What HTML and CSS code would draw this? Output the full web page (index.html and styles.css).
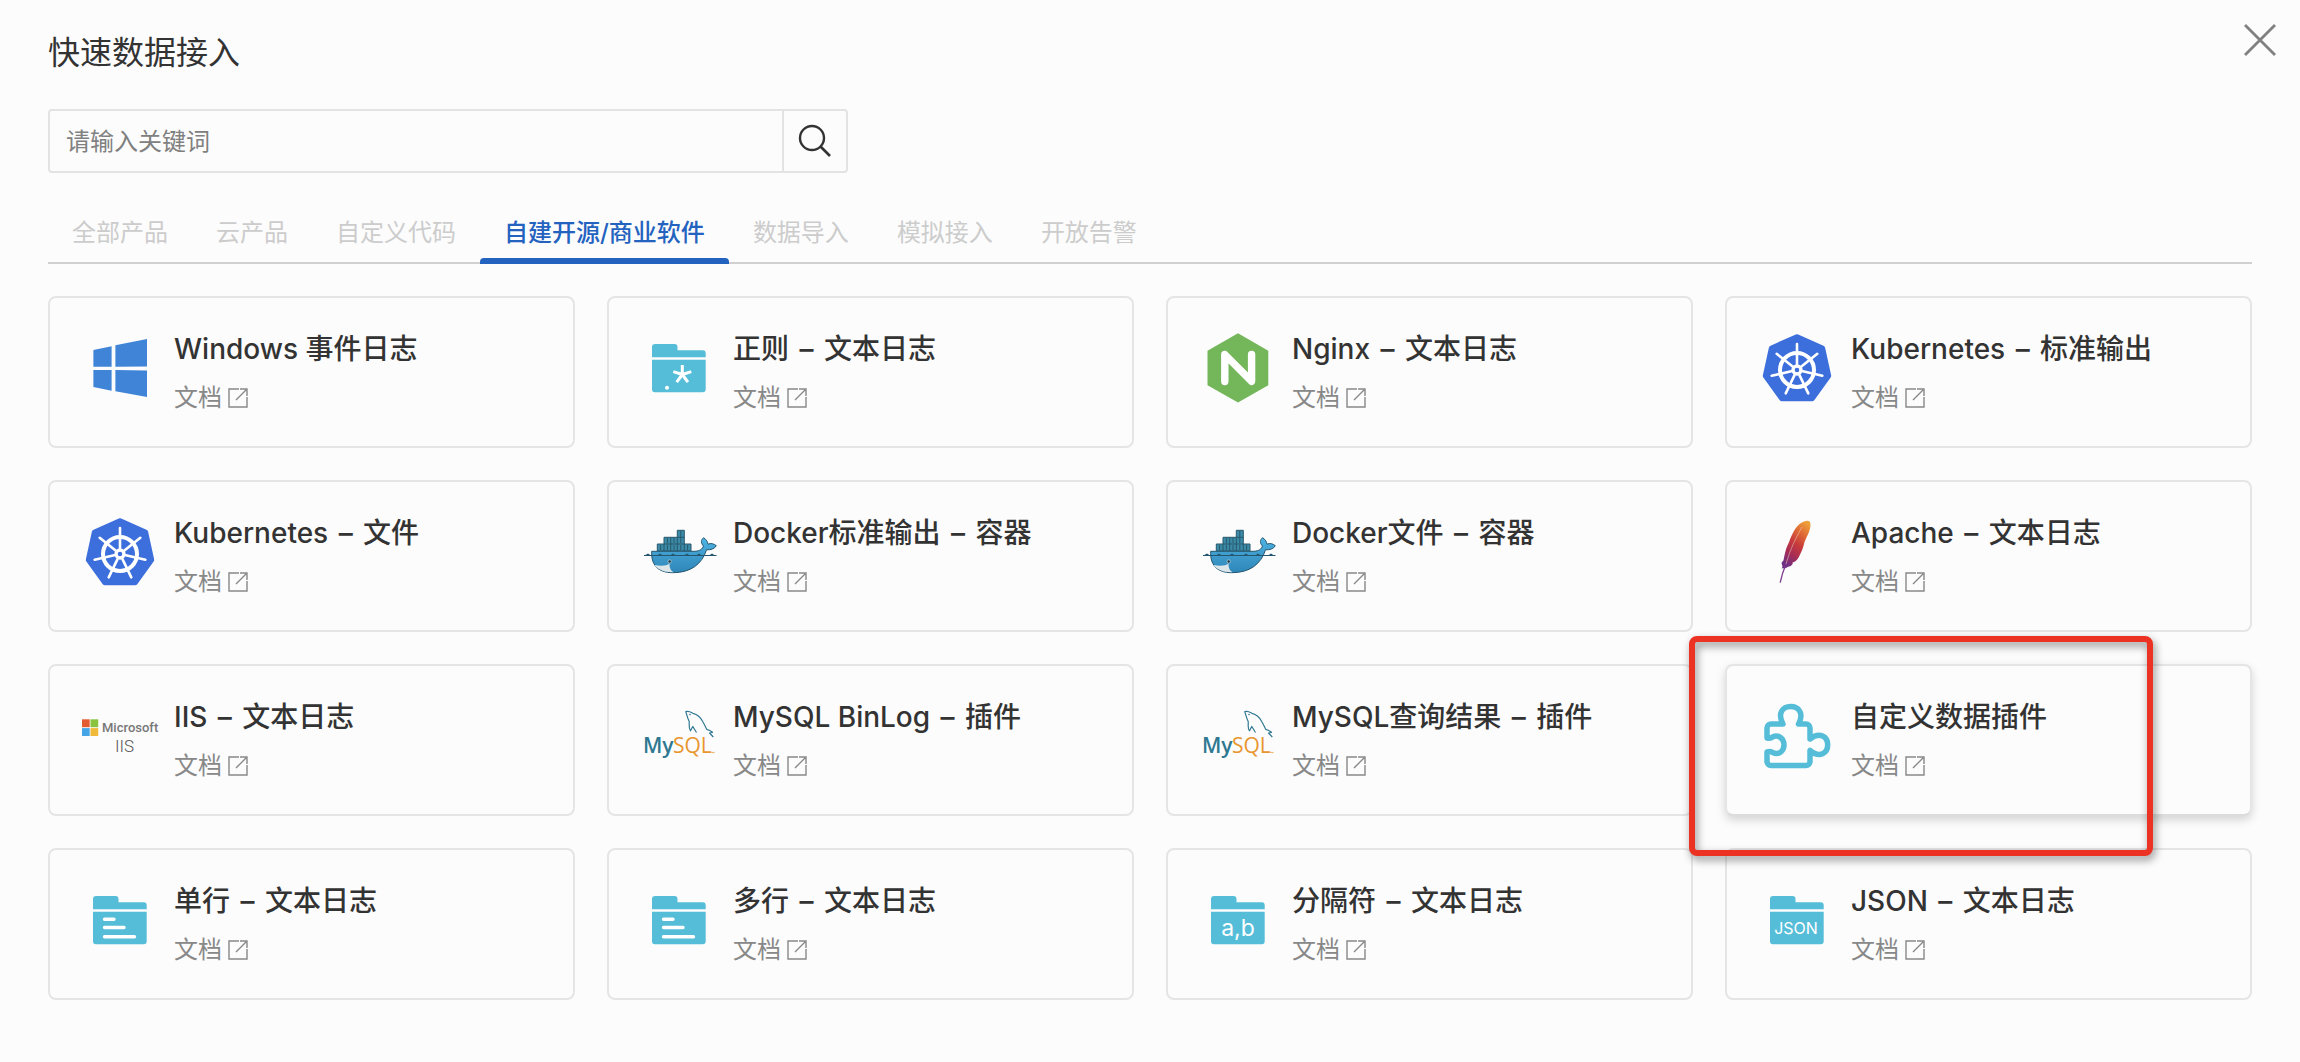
FILE: index.html
```html
<!DOCTYPE html>
<html lang="zh-CN">
<head>
<meta charset="utf-8">
<title>快速数据接入</title>
<link rel="stylesheet" href="styles.css">
</head>
<body>
<svg class="sprite" aria-hidden="true">
  <defs>
    <linearGradient id="feather" x1="0.8" y1="0" x2="0.3" y2="1">
      <stop offset="0" stop-color="#eea13a"/>
      <stop offset="0.25" stop-color="#df6a35"/>
      <stop offset="0.5" stop-color="#c73a3c"/>
      <stop offset="0.75" stop-color="#a52c55"/>
      <stop offset="1" stop-color="#6d2f86"/>
    </linearGradient>
    <linearGradient id="whale-body" x1="0" y1="0" x2="0" y2="1">
      <stop offset="0" stop-color="#4db4e4"/>
      <stop offset="0.5" stop-color="#3f9ccd"/>
      <stop offset="1" stop-color="#2e86b8"/>
    </linearGradient>
    <symbol id="external" viewBox="0 0 20 20">
      <path d="M11 1H1v18h18V9M8 12 18 2M12 1h7v7" fill="none" stroke="currentColor" stroke-width="1.4"/>
    </symbol>
    <symbol id="windows" viewBox="0 0 80 80">
      <path fill="#3f84d6" d="M13.4 22 31.6 18.3V38.7H13.4zM35.4 17.3 67 11V38.4L35.4 38.7zM13.4 42H31.6V62.7L13.4 59zM35.4 42 67 42.4V69L35.4 63.3z"/>
    </symbol>
    <symbol id="folder" viewBox="0 0 80 80">
      <path fill="#56bdd9" d="M13 29.3V19a3 3 0 0 1 3-3H35.5a3 3 0 0 1 3 3V22.3H63.7a3 3 0 0 1 3 3V29.3zM13 31.7H66.7V61.3a3 3 0 0 1-3 3H16a3 3 0 0 1-3-3z"/>
    </symbol>
    <symbol id="regex" viewBox="0 0 80 80">
      <use href="#folder"/>
      <path d="M43.3 46.5V37M43.3 46.5 52.3 43.6M43.3 46.5 48.9 54.2M43.3 46.5 37.7 54.2M43.3 46.5 34.3 43.6" stroke="#fff" stroke-width="3" fill="none"/>
      <circle cx="28" cy="59.7" r="2" fill="#fff"/>
    </symbol>
    <symbol id="lines" viewBox="0 0 80 80">
      <use href="#folder"/>
      <path d="M24.5 39.3H34M24.5 47.5H44M24.5 56.8H54.5" stroke="#fff" stroke-width="3.4" stroke-linecap="round"/>
    </symbol>
    <symbol id="nginx" viewBox="0 0 80 80">
      <path fill="#74b65a" d="M40 5.3 70.3 22.7V57.3L40 74.5 9.5 57.3V22.7z"/>
      <path d="M26.8 53.5V26.5L53.6 53.3V26.5" fill="none" stroke="#fff" stroke-width="7.4" stroke-linecap="round" stroke-linejoin="round"/>
    </symbol>
    <symbol id="kubernetes" viewBox="0 0 80 80">
      <path fill="#3c6edc" stroke="#3c6edc" stroke-width="6" stroke-linejoin="round" d="M40 9.2 65.2 20.4 71.2 47.8 55 70.3H25L8.8 47.8 14.8 20.4z"/>
      <g fill="none" stroke="#fff" stroke-linecap="round">
        <circle cx="40" cy="42" r="17" stroke-width="4"/>
        <circle cx="40" cy="42" r="4" stroke-width="3.4"/>
        <g stroke-width="2.6">
          <path d="M40 36V16"/>
          <path d="M40 36V16" transform="rotate(51.43 40 42)"/>
          <path d="M40 36V16" transform="rotate(102.86 40 42)"/>
          <path d="M40 36V16" transform="rotate(154.29 40 42)"/>
          <path d="M40 36V16" transform="rotate(205.71 40 42)"/>
          <path d="M40 36V16" transform="rotate(257.14 40 42)"/>
          <path d="M40 36V16" transform="rotate(308.57 40 42)"/>
        </g>
      </g>
    </symbol>
    <symbol id="docker" viewBox="0 0 80 80">
      <path fill="#3b8ba8" stroke="#29586b" stroke-width="1" d="M18.3 39V32H25V25.3H38.3V18.3H45.3V32H52V39z"/>
      <path fill="none" stroke="#29586b" stroke-width="1" d="M25 32H45.3M38.3 25.3H45.3M25 32V39M31.7 25.3V39M38.3 25.3V39M45.3 32V39M28.4 26V31M35 26V31M41.8 19V31M21.6 33V38M28.4 33V38M35 33V38M41.8 33V38M48.6 33V38"/>
      <path fill="url(#whale-body)" stroke="#24566f" stroke-width="1" d="M12.7 39.3H56C61 39 63.5 37 64.5 34 61.5 31 62 28 64.5 25.7 67.5 27.5 68.7 30 69 32.2 72 30.8 75 31.8 77.3 33.7 75.5 37 71.5 38 67.5 37.8 63 52 52 60.7 34 60.7 18 60.7 12 52 12.7 39.3z"/>
      <path fill="#dce6e8" d="M15.5 53C22 54.3 28 53.8 30.5 51.5 30.5 55 31 58 34.5 60.2 26 60.6 19 58 15.5 53z"/>
      <path fill="none" stroke="#24566f" stroke-width="1" d="M5 43.5H77.5"/>
      <path fill="#24566f" d="M5.5 43.5 9 41.5 12 43.5zM18 43.5 21 41.5 24 43.5zM31 43.5 34 41.5 37 43.5zM45 43.5 48 41.5 51 43.5zM57 43.5 60 41.5 63 43.5zM70 43.5 73 41.5 76 43.5z"/>
      <circle cx="30.7" cy="49.5" r="1.7" fill="#1d3d4d" stroke="#cfe3ea" stroke-width="0.6"/>
    </symbol>
    <symbol id="apache" viewBox="0 0 80 80">
      <path fill="url(#feather)" d="M50.2 8.7C53.5 8.5 54.2 12 53 16.5 52 21 50 24 47.5 30 46.5 35 44.5 40 42 44.7 40 48.5 37.500 50 35.500 50.500 36.500 52 34 54.500 31 54.800 28 57 26 56 24.500 56.500 27 54 23.500 52 25 50 27 49 26.500 47 27.200 44.700 28.500 38 30 34 32.200 29.700 35 22 39 14 43.700 11.300 46 9.500 48 8.700 50.200 8.700z"/>
      <path fill="none" stroke="#7c3b8c" stroke-width="1.3" d="M23.2 70.7C24.5 64 26.5 58 29 52"/>
      <path fill="none" stroke="#f0c8b8" stroke-opacity="0.7" stroke-width="0.8" d="M29 52C33 38 38 27 45 15"/>
    </symbol>
    <symbol id="mysql" viewBox="0 0 80 80">
      <path fill="none" stroke="#2f7891" stroke-width="1.2" stroke-linejoin="round" d="M57.5 36.5 53.8 30.5 51.5 34.8C49.3 32 50.5 29 50.2 25.5 48.5 22 47.5 18 46.8 15.6 50 14.8 52 16.2 54 17.3 59 18.5 62 22 63.7 25.5 65.5 28.5 66.5 31 67.7 33.3 70.5 34 72 35 73.5 36.3L70.5 37 74.3 41"/>
      <circle cx="51" cy="18.5" r="0.8" fill="#2f7891"/>
      <path d="M72.500 56.500h3" stroke="#e8962f" stroke-width="1.200" opacity="0.700"/>
    </symbol>
    <symbol id="microsoft" viewBox="0 0 80 80">
      <path fill="#e35b30" d="M2 23.3h7.7v7.9H2z"/>
      <path fill="#8ac43f" d="M10.5 23.3h7.7v7.9h-7.7z"/>
      <path fill="#45a5e6" d="M2 32.1h7.7V40H2z"/>
      <path fill="#f0b93a" d="M10.5 32.1h7.7V40h-7.7z"/>
    </symbol>
    <symbol id="plugin" viewBox="0 0 80 80">
      <path fill="none" stroke="#56bdd9" stroke-width="5.5" stroke-linejoin="round" d="M10 42V32a4 4 0 0 1 4-4H26C20 17 26 10.5 33.6 10.5 41.2 10.5 47.5 17 41.5 28H49a4 4 0 0 1 4 4V43C63 35 70.7 41 70.7 48.8 70.7 57 63 62.5 53 54.5V65.5a4 4 0 0 1-4 4H14a4 4 0 0 1-4-4V56C12 55.5 14 55 15.5 56.5 22 59.5 27 55 27 48.8 27 42.5 21.5 38 15.5 41 14 42.5 12 42.5 10 42z"/>
    </symbol>
  </defs>
</svg>

<main class="dialog">
  <header class="dialog-header">
    <h1 class="dialog-title">快速数据接入</h1>
    <button class="close" type="button" aria-label="关闭">
      <svg viewBox="0 0 32 32" width="32" height="32"><path d="M1 1 31 31M31 1 1 31" stroke="#808080" stroke-width="2.8"/></svg>
    </button>
  </header>

  <div class="dialog-body">
    <form class="search" role="search">
      <input class="search-input" type="text" placeholder="请输入关键词" aria-label="请输入关键词">
      <button class="search-button" type="button" aria-label="搜索">
        <svg viewBox="0 0 36 36" width="36" height="36"><circle cx="15" cy="15" r="12" fill="none" stroke="#333" stroke-width="2.4"/><path d="M23.5 23.5 33 33" stroke="#333" stroke-width="2.6"/></svg>
      </button>
    </form>

    <nav class="tabs">
      <button class="tab" type="button">全部产品</button>
      <button class="tab" type="button">云产品</button>
      <button class="tab" type="button">自定义代码</button>
      <button class="tab tab-active" type="button">自建开源/商业软件</button>
      <button class="tab" type="button">数据导入</button>
      <button class="tab" type="button">模拟接入</button>
      <button class="tab" type="button">开放告警</button>
    </nav>

    <section class="cards">
      <article class="card">
        <svg class="logo" viewBox="0 0 80 80"><use href="#windows"/></svg>
        <div class="info"><h2 class="name">Windows 事件日志</h2><a class="doc" href="#">文档<svg class="external"><use href="#external"/></svg></a></div>
      </article>
      <article class="card">
        <svg class="logo" viewBox="0 0 80 80"><use href="#regex"/></svg>
        <div class="info"><h2 class="name">正则 <span class="dash">–</span> 文本日志</h2><a class="doc" href="#">文档<svg class="external"><use href="#external"/></svg></a></div>
      </article>
      <article class="card">
        <svg class="logo" viewBox="0 0 80 80"><use href="#nginx"/></svg>
        <div class="info"><h2 class="name">Nginx <span class="dash">–</span> 文本日志</h2><a class="doc" href="#">文档<svg class="external"><use href="#external"/></svg></a></div>
      </article>
      <article class="card">
        <svg class="logo" viewBox="0 0 80 80"><use href="#kubernetes"/></svg>
        <div class="info"><h2 class="name">Kubernetes <span class="dash">–</span> 标准输出</h2><a class="doc" href="#">文档<svg class="external"><use href="#external"/></svg></a></div>
      </article>

      <article class="card">
        <svg class="logo" viewBox="0 0 80 80"><use href="#kubernetes"/></svg>
        <div class="info"><h2 class="name">Kubernetes <span class="dash">–</span> 文件</h2><a class="doc" href="#">文档<svg class="external"><use href="#external"/></svg></a></div>
      </article>
      <article class="card">
        <svg class="logo" viewBox="0 0 80 80"><use href="#docker"/></svg>
        <div class="info"><h2 class="name">Docker标准输出 <span class="dash">–</span> 容器</h2><a class="doc" href="#">文档<svg class="external"><use href="#external"/></svg></a></div>
      </article>
      <article class="card">
        <svg class="logo" viewBox="0 0 80 80"><use href="#docker"/></svg>
        <div class="info"><h2 class="name">Docker文件 <span class="dash">–</span> 容器</h2><a class="doc" href="#">文档<svg class="external"><use href="#external"/></svg></a></div>
      </article>
      <article class="card">
        <svg class="logo" viewBox="0 0 80 80"><use href="#apache"/></svg>
        <div class="info"><h2 class="name">Apache <span class="dash">–</span> 文本日志</h2><a class="doc" href="#">文档<svg class="external"><use href="#external"/></svg></a></div>
      </article>

      <article class="card">
        <svg class="logo" viewBox="0 0 80 80"><use href="#microsoft"/><text class="ms-name" x="22" y="36">Microsoft</text><text class="ms-iis" x="35" y="56">IIS</text></svg>
        <div class="info"><h2 class="name">IIS <span class="dash">–</span> 文本日志</h2><a class="doc" href="#">文档<svg class="external"><use href="#external"/></svg></a></div>
      </article>
      <article class="card">
        <svg class="logo" viewBox="0 0 80 80"><use href="#mysql"/><text class="mysql-my" x="4" y="57">My</text><text class="mysql-sql" x="34" y="57">SQL</text></svg>
        <div class="info"><h2 class="name">MySQL BinLog <span class="dash">–</span> 插件</h2><a class="doc" href="#">文档<svg class="external"><use href="#external"/></svg></a></div>
      </article>
      <article class="card">
        <svg class="logo" viewBox="0 0 80 80"><use href="#mysql"/><text class="mysql-my" x="4" y="57">My</text><text class="mysql-sql" x="34" y="57">SQL</text></svg>
        <div class="info"><h2 class="name">MySQL查询结果 <span class="dash">–</span> 插件</h2><a class="doc" href="#">文档<svg class="external"><use href="#external"/></svg></a></div>
      </article>
      <article class="card card-raised">
        <svg class="logo" viewBox="0 0 80 80"><use href="#plugin"/></svg>
        <div class="info"><h2 class="name">自定义数据插件</h2><a class="doc" href="#">文档<svg class="external"><use href="#external"/></svg></a></div>
        <span class="marker"></span>
      </article>

      <article class="card">
        <svg class="logo" viewBox="0 0 80 80"><use href="#lines"/></svg>
        <div class="info"><h2 class="name">单行 <span class="dash">–</span> 文本日志</h2><a class="doc" href="#">文档<svg class="external"><use href="#external"/></svg></a></div>
      </article>
      <article class="card">
        <svg class="logo" viewBox="0 0 80 80"><use href="#lines"/></svg>
        <div class="info"><h2 class="name">多行 <span class="dash">–</span> 文本日志</h2><a class="doc" href="#">文档<svg class="external"><use href="#external"/></svg></a></div>
      </article>
      <article class="card">
        <svg class="logo" viewBox="0 0 80 80"><use href="#folder"/><text class="folder-ab" x="40" y="56">a,b</text></svg>
        <div class="info"><h2 class="name">分隔符 <span class="dash">–</span> 文本日志</h2><a class="doc" href="#">文档<svg class="external"><use href="#external"/></svg></a></div>
      </article>
      <article class="card">
        <svg class="logo" viewBox="0 0 80 80"><use href="#folder"/><text class="folder-json" x="39" y="54">JSON</text></svg>
        <div class="info"><h2 class="name">JSON <span class="dash">–</span> 文本日志</h2><a class="doc" href="#">文档<svg class="external"><use href="#external"/></svg></a></div>
      </article>
    </section>
  </div>
</main>
</body>
</html>
```
FILE: styles.css
```css
* {
  box-sizing: border-box;
}

body {
  margin: 0;
  background: #fcfcfc;
  color: #333;
  font-family: Inter, "Noto Sans CJK SC", sans-serif;
  font-size: 24px;
}

button,
input {
  font: inherit;
  color: inherit;
  margin: 0;
  padding: 0;
  border: 0;
  border-radius: 0;
  background: none;
}

button {
  cursor: pointer;
}

.sprite {
  position: absolute;
  width: 0;
  height: 0;
}

.dialog-header {
  display: flex;
  justify-content: space-between;
  align-items: flex-start;
  padding: 24px 24px 0 48px;
}

.dialog-title {
  margin: 5px 0 32px;
  font-size: 32px;
  line-height: 48px;
  font-weight: 400;
}

.close {
  display: flex;
}

.dialog-body {
  padding: 0 48px 60px;
}

.search {
  display: flex;
  width: 800px;
  max-width: 100%;
  height: 64px;
  border: 2px solid #e3e3e3;
  border-radius: 4px;
}

.search-input {
  flex: 1;
  min-width: 0;
  padding: 0 16px;
  outline: 0;
}

.search-input::placeholder {
  color: #808080;
  opacity: 1;
}

.search-button {
  display: flex;
  align-items: center;
  justify-content: center;
  width: 64px;
  border-left: 2px solid #e3e3e3;
}

.tabs {
  display: flex;
  margin: 27px 0 32px;
  box-shadow: inset 0 -2px #d0d0d0;
}

.tab {
  height: 64px;
  padding: 0 24px 4px;
  color: #ccc;
  white-space: nowrap;
}

.tab-active {
  position: relative;
  color: #2362bf;
  font-weight: 500;
}

.tab-active::after {
  content: "";
  position: absolute;
  left: 0;
  right: 0;
  bottom: 0;
  height: 6px;
  border-radius: 4px 4px 0 0;
  background: #2362bf;
}

.cards {
  display: grid;
  grid-template-columns: repeat(4, 1fr);
  gap: 32px;
}

.card {
  display: flex;
  gap: 14px;
  min-width: 0;
  padding: 30px;
  border: 2px solid #e5e5e5;
  border-radius: 8px;
}

.card-raised {
  position: relative;
  border-bottom-color: #dcdcdc;
  box-shadow: 0 4px 10px rgba(0, 0, 0, 0.16);
  background: #fcfcfc;
}

.logo {
  flex: none;
  width: 80px;
  height: 80px;
}

.info {
  min-width: 0;
}

.name {
  margin: 0 0 10px;
  font-size: 28px;
  line-height: 42px;
  font-weight: 500;
  white-space: nowrap;
}

.dash {
  margin: 0 3px;
}

.doc {
  display: flex;
  align-items: center;
  gap: 6px;
  line-height: 36px;
  color: #888;
  text-decoration: none;
}

.external {
  width: 20px;
  height: 20px;
}

.marker {
  position: absolute;
  left: -38px;
  top: -30px;
  width: 464px;
  height: 220px;
  border: 6px solid #ec3323;
  border-radius: 8px;
  filter: drop-shadow(2px 4px 4px rgba(0, 0, 0, 0.45));
  pointer-events: none;
}

.ms-name {
  font: 500 13px Roboto, sans-serif;
  fill: #777;
}

.ms-iis {
  font: 300 17px Roboto, sans-serif;
  fill: #555;
}

.mysql-my,
.mysql-sql {
  font: 600 21px "Open Sans", sans-serif;
  fill: #2f7891;
}

.mysql-sql {
  font-weight: 400;
  fill: #e8962f;
}

.folder-ab,
.folder-json {
  font: 500 24px Inter, sans-serif;
  fill: #fff;
  text-anchor: middle;
}

.folder-ab {
  font-size: 23px;
  font-weight: 400;
}

.folder-json {
  font-weight: 400;
  font-size: 16px;
}
```
